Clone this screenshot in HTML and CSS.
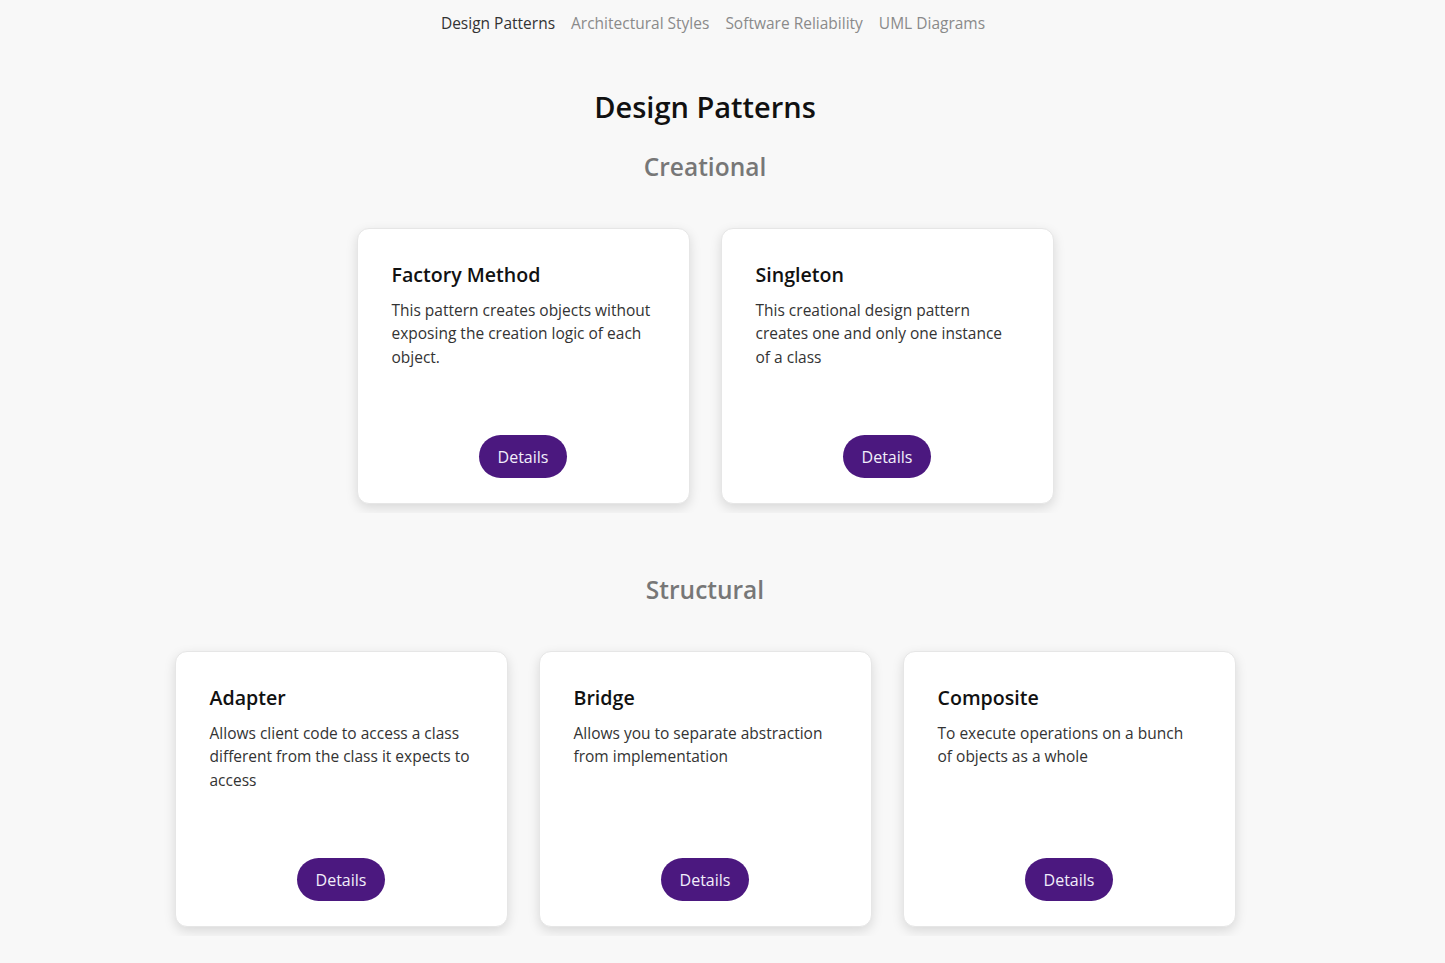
FILE: index.html
```html
<!DOCTYPE html>
<html lang="en">
<head>
<meta charset="utf-8">
<title>Design Patterns</title>
<link rel="stylesheet" href="styles.css">
</head>
<body>
<div class="page">
  <nav class="nav">
    <a class="nav-link active" href="#">Design Patterns</a>
    <a class="nav-link" href="#">Architectural Styles</a>
    <a class="nav-link" href="#">Software Reliability</a>
    <a class="nav-link" href="#">UML Diagrams</a>
  </nav>
  <h1 class="title">Design Patterns</h1>

  <h2 class="section-title first">Creational</h2>
  <div class="row">
    <div class="card">
      <h3 class="card-title">Factory Method</h3>
      <p class="card-text">This pattern creates objects without exposing the creation logic of each object.</p>
      <button class="btn">Details</button>
    </div>
    <div class="card">
      <h3 class="card-title">Singleton</h3>
      <p class="card-text">This creational design pattern creates one and only one instance of a class</p>
      <button class="btn">Details</button>
    </div>
  </div>

  <h2 class="section-title">Structural</h2>
  <div class="row">
    <div class="card">
      <h3 class="card-title">Adapter</h3>
      <p class="card-text">Allows client code to access a class different from the class it expects to access</p>
      <button class="btn">Details</button>
    </div>
    <div class="card">
      <h3 class="card-title">Bridge</h3>
      <p class="card-text">Allows you to separate abstraction from implementation</p>
      <button class="btn">Details</button>
    </div>
    <div class="card">
      <h3 class="card-title">Composite</h3>
      <p class="card-text">To execute operations on a bunch of objects as a whole</p>
      <button class="btn">Details</button>
    </div>
  </div>
</div>
</body>
</html>
```

FILE: styles.css
```css
html, body {
  margin: 0;
  padding: 0;
  background: #f8f8f8;
}
body {
  font-family: "Open Sans", "Noto Sans", sans-serif;
  color: #222;
}
.page {
  width: 1410px;
}
.nav {
  display: flex;
  justify-content: center;
  gap: 16px;
  padding: 11px 0 0 16px;
}
.nav-link {
  font-size: 15.5px;
  line-height: 24px;
  color: #8a8a8a;
  text-decoration: none;
}
.nav-link.active {
  color: #333;
}
.title {
  margin: 53px 0 0;
  text-align: center;
  font-size: 29px;
  line-height: 38px;
  font-weight: 600;
  color: #111;
}
.section-title {
  margin: 61px 0 0;
  text-align: center;
  font-size: 24.5px;
  line-height: 32px;
  font-weight: 600;
  color: #777;
}
.section-title.first {
  margin-top: 25px;
}
.row {
  display: flex;
  justify-content: center;
  gap: 31px;
  margin-top: 35px;
  padding: 10px 0 9px;
  overflow: hidden;
}
.card {
  box-sizing: border-box;
  width: 333px;
  height: 276px;
  display: flex;
  flex-direction: column;
  background: #fff;
  border: 1px solid #e6e6e6;
  border-radius: 12px;
  box-shadow: 0 4px 12px rgba(0, 0, 0, 0.13);
  padding: 32px 34px 25px 34px;
}
.card-title {
  margin: 0;
  font-size: 19.6px;
  line-height: 28px;
  font-weight: 600;
  color: #111;
}
.card-text {
  margin: 10px 1.5px 0 0;
  font-size: 15.5px;
  line-height: 23.3px;
  color: #333;
}
.btn {
  margin-top: auto;
  align-self: center;
  height: 43px;
  padding: 0 19px;
  border: none;
  border-radius: 22px;
  background: #4b187f;
  color: #f2eefa;
  font-family: "Open Sans", "Noto Sans", sans-serif;
  font-size: 16px;
  cursor: pointer;
}
```
